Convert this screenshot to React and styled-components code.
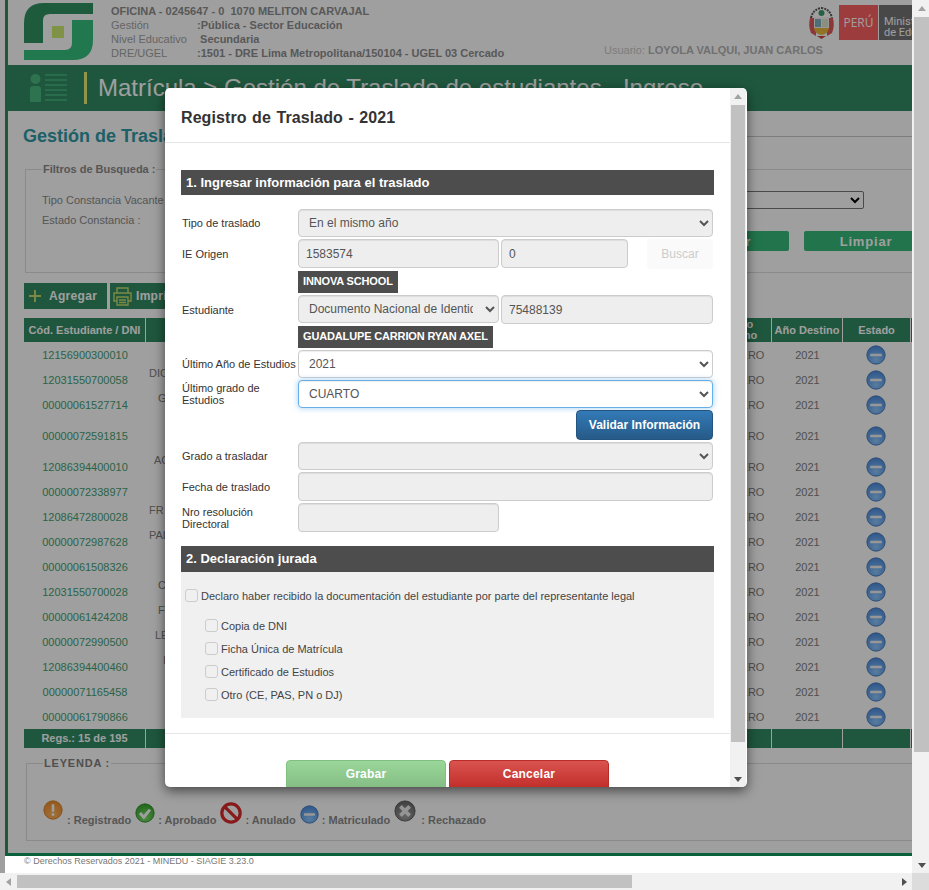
import React from 'react'
import styled, { createGlobalStyle } from 'styled-components'

const rows = [
    { cod: '12156900300010', name: '', indent: 0, height: 25 },
    { cod: '12031550700058', name: 'DIC', indent: 3, height: 25 },
    { cod: '00000061527714', name: 'G', indent: 12, height: 25 },
    { cod: '00000072591815', name: '', indent: 0, height: 37 },
    { cod: '12086394400010', name: 'AC', indent: 8, height: 25 },
    { cod: '00000072338977', name: '', indent: 0, height: 25 },
    { cod: '12086472800028', name: 'FR', indent: 3, height: 25 },
    { cod: '00000072987628', name: 'PAL', indent: 3, height: 25 },
    { cod: '00000061508326', name: '', indent: 0, height: 25 },
    { cod: '12031550700028', name: 'C', indent: 12, height: 25 },
    { cod: '00000061424208', name: 'F', indent: 12, height: 25 },
    { cod: '00000072990500', name: 'LE', indent: 9, height: 25 },
    { cod: '12086394400460', name: 'I', indent: 17, height: 25 },
    { cod: '00000071165458', name: '', indent: 0, height: 25 },
    { cod: '00000061790866', name: '', indent: 0, height: 25 },
]

const documents = ['Copia de DNI', 'Ficha Única de Matrícula', 'Certificado de Estudios', 'Otro (CE, PAS, PN o DJ)']

const Logo = () => (
    <svg width="69" height="57" viewBox="0 0 69 57">
        <path d="M69 0H20Q0 0 0 20V40H19V17Q19 11 26 11H69Z" fill="#309362" />
        <path d="M69 17H48V40Q48 47 41 47H0V57H49Q69 57 69 37Z" fill="#37c07d" />
        <rect x="28" y="23" width="12" height="12" fill="#cdeb71" />
    </svg>
)

const Escudo = () => (
    <svg width="27" height="33" viewBox="0 0 27 33">
        <path d="M3 12Q5 3 13.500 2Q22 3 24 12" fill="none" stroke="#555" strokeWidth="2" strokeDasharray="2 1" />
        <path d="M2 12Q0 20 3 27L8 30V12Z" fill="#e05a5a" />
        <path d="M25 12Q27 20 24 27L19 30V12Z" fill="#e05a5a" />
        <circle cx="13.500" cy="7" r="3" fill="#3f9a6d" />
        <rect x="6" y="11" width="15" height="11" fill="#f4f4f4" />
        <rect x="7" y="13" width="6" height="8" fill="#7fb0c0" />
        <rect x="14" y="13" width="6" height="8" fill="#dfe6c8" />
        <path d="M6 22H21Q20 28 13.500 29Q7 28 6 22Z" fill="#e8b93f" />
        <path d="M9 30L13.500 33L18 30Z" fill="#c8453f" />
    </svg>
)

const ListIcon = () => (
    <svg width="37" height="32" viewBox="0 0 37 32">
        <circle cx="5.500" cy="7" r="5" fill="#49b981" />
        <path d="M0 17Q0 14 3 14H8Q11 14 11 17V30H0Z" fill="#49b981" />
        <path d="M15 3H37M15 8H37M15 13H37M15 18H37M15 23H37M15 28H37" stroke="#49b981" strokeWidth="1.500" />
    </svg>
)

const PlusIcon = () => (
    <svg width="12" height="12" viewBox="0 0 12 12">
        <path d="M6 0V12M0 6H12" stroke="#c6dc6e" strokeWidth="2" />
    </svg>
)

const PrinterIcon = () => (
    <svg width="19" height="19" viewBox="0 0 19 19" fill="none" stroke="#c6dc6e" strokeWidth="1.400">
        <path d="M4 6V1H15V6" />
        <path d="M4 14H1V6H18V14H15" />
        <path d="M4 10H15V18H4ZM6 13H13M6 15.500H13" />
    </svg>
)

const statusColors = {
    registrado: ['#ffb45e', '#ee8f2e', '#d67b22'],
    aprobado: ['#7fe06a', '#35a82f', '#2a8a28'],
    matriculado: ['#8fc8ff', '#4f8fe0', '#3f70ad'],
    rechazado: ['#a0a0a0', '#6c6c6c', '#565656'],
    anulado: ['#d82a2a', '#d82a2a', '#d82a2a'],
}

const StatusIcon = ({ kind, size = 20 }) => (
    <svg width={size} height={size} viewBox="0 0 24 24">
        <defs>
            <radialGradient id={`glow-${kind}-${size}`} cx="50%" cy="75%" r="70%">
                <stop offset="0%" stopColor={statusColors[kind][0]} />
                <stop offset="100%" stopColor={statusColors[kind][1]} />
            </radialGradient>
        </defs>
        {kind === 'anulado' ? (
            <g fill="none" stroke="#d82a2a" strokeWidth="3.500">
                <circle cx="12" cy="12" r="10" />
                <path d="M5 5L19 19" />
            </g>
        ) : (
            <circle cx="12" cy="12" r="11" fill={`url(#glow-${kind}-${size})`} stroke={statusColors[kind][2]} strokeWidth="1" />
        )}
        {kind === 'matriculado' && <rect x="5" y="10.500" width="14" height="3" rx="1" fill="#f2f2f2" />}
        {kind === 'registrado' && <path d="M12 5V14M12 16V19" stroke="#fff" strokeWidth="3" />}
        {kind === 'aprobado' && <path d="M6 12L10.500 17L18 8" fill="none" stroke="#fff" strokeWidth="3.500" />}
        {kind === 'rechazado' && <path d="M7 7L17 17M17 7L7 17" stroke="#eee" strokeWidth="4" />}
    </svg>
)

const legend = [
    { kind: 'registrado', label: 'Registrado', size: 20, lift: 7, gap: 4 },
    { kind: 'aprobado', label: 'Aprobado', size: 20, lift: 4, gap: 3 },
    { kind: 'anulado', label: 'Anulado', size: 22, lift: 3, gap: 3 },
    { kind: 'matriculado', label: 'Matriculado', size: 19, lift: 3, gap: 3 },
    { kind: 'rechazado', label: 'Rechazado', size: 22, lift: 5, gap: 5 },
]

const App = () => {
    return (
        <Shell>
            <GlobalStyle />
            <Viewport>
                <Frame>
                    <Header>
                        <Logo />
                        <Info>
                            <strong>OFICINA - 0245647 - 0 &nbsp;1070 MELITON CARVAJAL</strong>
                            <InfoRow>Gestión<b>:Pública - Sector Educación</b></InfoRow>
                            <InfoRow>Nivel Educativo<b>&nbsp;Secundaria</b></InfoRow>
                            <InfoRow>DRE/UGEL<b>:1501 - DRE Lima Metropolitana/150104 - UGEL 03 Cercado</b></InfoRow>
                        </Info>
                        <UserSide>
                            <Brand>
                                <Escudo />
                                <PeruTag>PERÚ</PeruTag>
                                <MinTag>Ministerio<br />de Educación</MinTag>
                            </Brand>
                            <User>Usuario: <b>LOYOLA VALQUI, JUAN CARLOS</b></User>
                        </UserSide>
                    </Header>
                    <TitleBar>
                        <ListIcon />
                        <TitleMark />
                        <TitleText>Matrícula &gt; Gestión de Traslado de estudiantes - Ingreso</TitleText>
                    </TitleBar>
                    <Content>
                        <PageTitle><h1>Gestión de Traslado de estudiantes</h1></PageTitle>
                        <Filters>
                            <legend>Filtros de Busqueda :</legend>
                            <FilterRow>
                                <span>Tipo Constancia Vacante :</span>
                                <FilterSelect><option></option></FilterSelect>
                            </FilterRow>
                            <FilterLabel>Estado Constancia :</FilterLabel>
                            <FilterButtons>
                                <FilterButton>Buscar</FilterButton>
                                <FilterButton>Limpiar</FilterButton>
                            </FilterButtons>
                        </Filters>
                        <Actions>
                            <ActionButton><PlusIcon />Agregar</ActionButton>
                            <ActionButton $wide><PrinterIcon />Imprimir</ActionButton>
                        </Actions>
                        <Table>
                            <HeadRow>
                                <span>Cód. Estudiante / DNI</span>
                                <span>Apellidos y Nombres</span>
                                <span>Grado<br />Destino</span>
                                <span>Año Destino</span>
                                <span>Estado</span>
                                <span></span>
                            </HeadRow>
                            {rows.map(row =>
                                <Row key={row.cod} $height={row.height}>
                                    <Code>{row.cod}</Code>
                                    <Name $indent={row.indent}>{row.name}</Name>
                                    <span>TERCERO</span>
                                    <span>2021</span>
                                    <StateCell><StatusIcon kind="matriculado" /></StateCell>
                                </Row>
                            )}
                            <FootRow>
                                <span>Regs.: 15 de 195</span>
                                <span></span>
                                <span></span>
                                <span></span>
                                <span></span>
                                <span></span>
                            </FootRow>
                        </Table>
                        <Legend>
                            <legend>LEYENDA :</legend>
                            <LegendItems>
                                {legend.map(item =>
                                    <LegendItem key={item.kind} $gap={item.gap}>
                                        <LegendIcon $lift={item.lift}><StatusIcon kind={item.kind} size={item.size} /></LegendIcon>
                                        <span>: {item.label}</span>
                                    </LegendItem>
                                )}
                            </LegendItems>
                        </Legend>
                    </Content>
                </Frame>
                <Copyright>© Derechos Reservados 2021 - MINEDU - SIAGIE 3.23.0</Copyright>
                <Backdrop>
                    <Modal>
                        <ModalMain>
                            <ModalHeader>Registro de Traslado - 2021</ModalHeader>
                            <ModalBody>
                                <SectionBar>1. Ingresar información para el traslado</SectionBar>
                                <FormRow>
                                    <FieldLabel>Tipo de traslado</FieldLabel>
                                    <Select disabled><option>En el mismo año</option></Select>
                                </FormRow>
                                <FormRow>
                                    <FieldLabel>IE Origen</FieldLabel>
                                    <Fields>
                                        <Input $width={201} disabled value="1583574" readOnly />
                                        <Input $width={127} disabled value="0" readOnly />
                                        <SearchButton disabled>Buscar</SearchButton>
                                    </Fields>
                                </FormRow>
                                <FormRow>
                                    <span></span>
                                    <Fields><DarkTag>INNOVA SCHOOL</DarkTag></Fields>
                                </FormRow>
                                <FormRow>
                                    <FieldLabel>Estudiante</FieldLabel>
                                    <Fields>
                                        <Select $width={201} disabled><option>Documento Nacional de Identidad</option></Select>
                                        <Input disabled value="75488139" readOnly />
                                    </Fields>
                                </FormRow>
                                <FormRow>
                                    <span></span>
                                    <Fields><DarkTag>GUADALUPE CARRION RYAN AXEL</DarkTag></Fields>
                                </FormRow>
                                <FormRow>
                                    <FieldLabel>Último Año de Estudios</FieldLabel>
                                    <Select><option>2021</option></Select>
                                </FormRow>
                                <FormRow>
                                    <FieldLabel>Último grado de Estudios</FieldLabel>
                                    <Select $focus><option>CUARTO</option></Select>
                                </FormRow>
                                <ValidateRow>
                                    <ValidateButton>Validar Información</ValidateButton>
                                </ValidateRow>
                                <FormRow>
                                    <FieldLabel>Grado a trasladar</FieldLabel>
                                    <Select disabled><option></option></Select>
                                </FormRow>
                                <FormRow>
                                    <FieldLabel>Fecha de traslado</FieldLabel>
                                    <Input disabled />
                                </FormRow>
                                <FormRow>
                                    <FieldLabel>Nro resolución Directoral</FieldLabel>
                                    <Input $width={201} disabled />
                                </FormRow>
                                <SectionBar $second>2. Declaración jurada</SectionBar>
                                <Declaration>
                                    <CheckLine>
                                        <Box />
                                        <span>Declaro haber recibido la documentación del estudiante por parte del representante legal</span>
                                    </CheckLine>
                                    <DocumentList>
                                        {documents.map(doc =>
                                            <CheckLine key={doc}>
                                                <Box />
                                                <span>{doc}</span>
                                            </CheckLine>
                                        )}
                                    </DocumentList>
                                </Declaration>
                            </ModalBody>
                            <ModalFooter>
                                <SaveButton>Grabar</SaveButton>
                                <CancelButton>Cancelar</CancelButton>
                            </ModalFooter>
                        </ModalMain>
                        <ModalBar>
                            <Arrow $dir="up" $color="#a3a3a3" />
                            <ModalThumb />
                            <Arrow $dir="down" $color="#505050" />
                        </ModalBar>
                    </Modal>
                </Backdrop>
            </Viewport>
            <VerticalBar>
                <Arrow $dir="up" $color="#a3a3a3" />
                <PageThumb />
                <Arrow $dir="down" $color="#505050" />
            </VerticalBar>
            <HorizontalBar>
                <Arrow $dir="left" $color="#a3a3a3" />
                <HorizontalTrack><HorizontalThumb /></HorizontalTrack>
                <Arrow $dir="right" $color="#505050" />
            </HorizontalBar>
            <Corner />
        </Shell>
    );
};

const GlobalStyle = createGlobalStyle`
    html, body {
        margin: 0;
        padding: 0;
        overflow: hidden;
        background: #fff;
    }
    * {
        box-sizing: border-box;
    }
    body, input, select, button {
        font-family: "Liberation Sans", Arial, sans-serif;
    }
`

const Shell = styled.div`
    display: grid;
    grid-template-columns: 912px 17px;
    grid-template-rows: 873px 17px;
    width: 929px;
    height: 890px;
    overflow: hidden;
`

const Viewport = styled.div`
    position: relative;
    overflow: hidden;
    border-left: 5px solid #9f9f9f;
    background: #fff;
`

const Frame = styled.div`
    width: 1100px;
    height: 856px;
    border-left: 3px solid #338c64;
    border-bottom: 3px solid #0d9c5e;
    overflow: hidden;
`

const Header = styled.div`
    display: flex;
    height: 65px;
    padding: 3px 0 0 16px;
`

const Info = styled.div`
    display: flex;
    flex-direction: column;
    width: 493px;
    margin-left: 18px;
    padding-top: 1px;
    font-size: 11px;
    line-height: 14px;
    color: #a2a2a2;
    strong {
        color: #8e8e8e;
    }
`

const InfoRow = styled.div`
    display: grid;
    grid-template-columns: 86px 1fr;
    b {
        color: #8e8e8e;
    }
`

const UserSide = styled.div`
    display: flex;
    flex-direction: column;
    width: 400px;
`

const Brand = styled.div`
    display: flex;
    align-items: flex-start;
    height: 41px;
    padding: 2px 0 0 204px;
    svg {
        margin-top: 1px;
        margin-right: 4px;
    }
`

const PeruTag = styled.div`
    width: 39px;
    height: 35px;
    margin-right: 1px;
    background: #fb6060;
    color: #fff;
    font: 12px/35px "Open Sans", sans-serif;
    text-align: center;
`

const MinTag = styled.div`
    width: 90px;
    height: 35px;
    padding: 11px 0 0 5px;
    background: #747474;
    color: #fff;
    font: 11px/11px Roboto, sans-serif;
`

const User = styled.div`
    font-size: 11px;
    line-height: 14px;
    color: #c8c8c8;
    margin-top: -1px;
    b {
        color: #b4b4b4;
    }
`

const TitleBar = styled.div`
    display: flex;
    align-items: center;
    height: 46px;
    padding-left: 22px;
    background: #338c64;
`

const TitleMark = styled.div`
    width: 3px;
    height: 32px;
    margin: 0 11px 0 17px;
    background: #e6f07a;
`

const TitleText = styled.div`
    font-size: 24px;
    color: #fff;
    white-space: nowrap;
`

const Content = styled.div`
    padding-left: 16px;
`

const PageTitle = styled.div`
    display: flex;
    align-items: center;
    height: 51px;
    gap: 10px;
    h1 {
        margin: 0 0 0 -1px;
        font-size: 18px;
        color: #2f9aa6;
        white-space: nowrap;
    }
    &::after {
        content: '';
        flex: 1;
        height: 1px;
        background: #c8c8c8;
    }
`

const Filters = styled.fieldset`
    margin: 0 0 0 1px;
    padding: 15px 0 21px 16px;
    min-width: 0;
    border: 1px solid #ddd;
    font-size: 11px;
    color: #8a8a8a;
    legend {
        height: 14px;
        padding: 0 1px;
        font-weight: bold;
        font-size: 11px;
        line-height: 14px;
        color: #8a8a8a;
    }
`

const FilterRow = styled.div`
    display: grid;
    grid-template-columns: 358px 464px;
    align-items: center;
    height: 18px;
`

const FilterSelect = styled.select`
    height: 18px;
    border: 1px solid #777;
    border-radius: 2px;
    background: #fff;
`

const FilterLabel = styled.div`
    height: 14px;
    margin: 4px 0 4px;
    line-height: 14px;
`

const FilterButtons = styled.div`
    display: flex;
    gap: 15px;
    height: 20px;
    padding-left: 623px;
`

const FilterButton = styled.button`
    width: 124px;
    height: 20px;
    padding: 0;
    border: 0;
    border-radius: 2px;
    background: #37bb7a;
    color: #fff;
    font-weight: bold;
    font-size: 13px;
    letter-spacing: .8px;
`

const Actions = styled.div`
    display: flex;
    gap: 3px;
    margin-top: 10px;
`

const ActionButton = styled.div`
    display: flex;
    align-items: center;
    gap: ${props => props.$wide ? '4px' : '8px'};
    width: ${props => props.$wide ? '120px' : '83px'};
    height: 26px;
    padding-left: ${props => props.$wide ? '3px' : '5px'};
    background: #338c64;
    color: #fff;
    font-weight: bold;
    font-size: 12px;
    letter-spacing: .3px;
`

const Table = styled.div`
    width: 1000px;
    margin-top: 9px;
    font-size: 11px;
`

const gridColumns = '122px 557px 69px 71px 68px 113px'

const HeadRow = styled.div`
    display: grid;
    grid-template-columns: ${gridColumns};
    height: 24px;
    background: #338c64;
    color: #fff;
    font-weight: bold;
    text-align: center;
    span {
        display: flex;
        align-items: center;
        justify-content: center;
        border-right: 1px solid #fff;
        line-height: 11px;
    }
`

const Row = styled.div`
    display: grid;
    grid-template-columns: ${gridColumns};
    align-items: center;
    justify-items: center;
    height: ${props => props.$height}px;
    color: #808080;
`

const Code = styled.span`
    color: #469f73;
`

const Name = styled.span`
    justify-self: start;
    align-self: start;
    height: 12px;
    padding-left: ${props => props.$indent}px;
    line-height: 12px;
`

const StateCell = styled.div`
    display: flex;
    margin-right: 2px;
`

const FootRow = styled(HeadRow)`
    height: 19px;
`

const Legend = styled.fieldset`
    height: 85px;
    margin: 8px 0 0 2px;
    padding: 0 0 0 16px;
    min-width: 0;
    border: 1px solid #ddd;
    legend {
        height: 14px;
        padding: 0 1px;
        font-weight: bold;
        font-size: 11px;
        line-height: 14px;
        letter-spacing: .8px;
        color: #808080;
    }
`

const LegendItems = styled.div`
    display: flex;
    gap: 4px;
    align-items: flex-end;
    margin-top: 30px;
`

const LegendItem = styled.div`
    display: flex;
    align-items: flex-end;
    gap: ${props => props.$gap}px;
    font-size: 11px;
    font-weight: bold;
    color: #8a8a8a;
    line-height: 14px;
`

const LegendIcon = styled.div`
    display: flex;
    margin-bottom: ${props => props.$lift}px;
`

const Copyright = styled.div`
    height: 17px;
    padding-left: 19px;
    font-size: 9px;
    line-height: 11px;
    color: #777;
`

const Backdrop = styled.div`
    position: absolute;
    top: 0;
    left: -5px;
    width: 912px;
    height: 856px;
    padding: 88px 0 0 165px;
    background: rgba(0, 0, 0, .375);
`

const Modal = styled.div`
    display: flex;
    width: 582px;
    height: 699px;
    border-radius: 5px;
    background: #fff;
    box-shadow: 0 4px 12px rgba(0, 0, 0, .55);
    overflow: hidden;
`

const ModalMain = styled.div`
    width: 565px;
    height: 699px;
    overflow: hidden;
`

const ModalHeader = styled.div`
    height: 55px;
    padding-left: 16px;
    border-bottom: 1px solid #e5e5e5;
    font-weight: bold;
    font-size: 16px;
    word-spacing: 1px;
    letter-spacing: .08px;
    line-height: 59px;
    color: #333;
`

const ModalBody = styled.div`
    display: flex;
    flex-direction: column;
    gap: 2px;
    padding: 27px 16px 15px;
    border-bottom: 1px solid #e5e5e5;
`

const SectionBar = styled.div`
    width: 533px;
    height: ${props => props.$second ? '26px' : '25px'};
    margin-top: ${props => props.$second ? '12px' : '0'};
    margin-bottom: ${props => props.$second ? '-2px' : '12px'};
    padding-left: 5px;
    background: #4d4d4d;
    color: #fff;
    font-weight: bold;
    font-size: 13px;
    line-height: 25px;
`

const FormRow = styled.div`
    display: grid;
    grid-template-columns: 117px 415px;
    align-items: center;
`

const FieldLabel = styled.label`
    padding-left: 1px;
    font-size: 11px;
    line-height: 12px;
    color: #333;
`

const Fields = styled.div`
    display: flex;
    gap: 2px;
`

const Select = styled.select`
    width: ${props => props.$width ? `${props.$width}px` : '100%'};
    flex-shrink: 0;
    height: 28px;
    padding: 0 ${props => props.$width ? '9px' : '6px'} 0 6px;
    border: 1px solid ${props => props.$focus ? '#66afe9' : '#ccc'};
    border-radius: 4px;
    background: ${props => props.disabled ? '#eee' : '#fff'};
    box-shadow: ${props => props.$focus ? 'inset 0 1px 1px rgba(0,0,0,.075), 0 0 6px rgba(102,175,233,.6)' : 'inset 0 1px 1px rgba(0,0,0,.075)'};
    color: #555;
    font-size: 12px;
    opacity: 1;
    outline: none;
    &:disabled {
        opacity: 1;
        color: #555;
    }
`

const Input = styled.input`
    width: ${props => props.$width ? `${props.$width}px` : '100%'};
    flex-shrink: ${props => props.$width ? 0 : 1};
    height: 29px;
    padding: 0 7px;
    border: 1px solid #ccc;
    border-radius: 4px;
    background: #eee;
    box-shadow: inset 0 1px 1px rgba(0,0,0,.075);
    color: #555;
    font-size: 12px;
    opacity: 1;
    &:disabled {
        color: #555;
        -webkit-text-fill-color: #555;
    }
`

const SearchButton = styled.button`
    width: 66px;
    height: 30px;
    margin-left: 17px;
    padding: 0;
    border: 0;
    border-radius: 4px;
    background: #fafafa;
    color: #ccc;
    font-size: 12px;
`

const DarkTag = styled.span`
    height: 22px;
    padding: 0 5px;
    background: #4d4d4d;
    color: #fff;
    font-weight: bold;
    font-size: 11px;
    letter-spacing: -.15px;
    line-height: 21px;
`

const ValidateRow = styled.div`
    display: flex;
    justify-content: flex-end;
    width: 532px;
`

const ValidateButton = styled.button`
    width: 137px;
    height: 30px;
    padding: 0;
    border: 1px solid #245580;
    border-radius: 4px;
    background: linear-gradient(#337ab7, #265a88);
    color: #fff;
    font-weight: bold;
    font-size: 12px;
`

const Declaration = styled.div`
    width: 533px;
    height: 146px;
    padding: 15px 0 0 4px;
    background: #f0f0f0;
`

const CheckLine = styled.div`
    display: flex;
    align-items: flex-start;
    gap: 3px;
    height: 23px;
    color: #444;
    font-size: 11px;
    span {
        margin-top: 2px;
        line-height: 14px;
    }
`

const Box = styled.span`
    width: 13px;
    height: 13px;
    border: 1px solid #ccc;
    border-radius: 3px;
    background: #f0f0f0;
`

const DocumentList = styled.div`
    margin-top: 7px;
    padding-left: 20px;
`

const ModalFooter = styled.div`
    display: flex;
    gap: 3px;
    padding: 26px 0 0 121px;
`

const SaveButton = styled.button`
    flex-shrink: 0;
    width: 160px;
    height: 40px;
    padding: 0 0 13px;
    border: 1px solid #7fbf7f;
    border-radius: 4px;
    background: linear-gradient(#9ad69a 0, #84bd84 27px);
    color: #fff;
    font-weight: bold;
    font-size: 12px;
    letter-spacing: .2px;
`

const CancelButton = styled(SaveButton)`
    border-color: #b92c28;
    background: linear-gradient(#d9534f 0, #c12e2a 27px);
`

const ModalBar = styled.div`
    display: flex;
    flex-direction: column;
    align-items: center;
    width: 16px;
    margin-right: 1px;
    background: #f1f1f1;
`

const Arrow = styled.div`
    flex-shrink: 0;
    width: ${props => props.$dir === 'left' || props.$dir === 'right' ? '17px' : '100%'};
    height: ${props => props.$dir === 'left' || props.$dir === 'right' ? '100%' : '17px'};
    position: relative;
    &::after {
        content: '';
        position: absolute;
        top: 50%;
        left: 50%;
        transform: translate(-50%, -50%);
        border: 4px solid transparent;
        border-width: ${props => props.$dir === 'left' || props.$dir === 'right' ? '4px 5px' : '5px 4px'};
        ${props => ({ up: 'border-bottom-color', down: 'border-top-color', left: 'border-right-color', right: 'border-left-color' })[props.$dir]}: ${props => props.$color};
        margin-top: ${props => props.$dir === 'up' ? '-3px' : props.$dir === 'down' ? '3px' : '0'};
        margin-left: ${props => props.$dir === 'left' ? '-3px' : props.$dir === 'right' ? '3px' : '0'};
    }
`

const ModalThumb = styled.div`
    width: 14px;
    height: 637px;
    margin-bottom: auto;
    background: #c1c1c1;
`

const VerticalBar = styled.div`
    display: flex;
    flex-direction: column;
    padding-left: 2px;
    background: #f1f1f1;
`

const PageThumb = styled.div`
    width: 15px;
    height: 735px;
    margin-bottom: auto;
    background: #c1c1c1;
`

const HorizontalBar = styled.div`
    display: flex;
    background: #f1f1f1;
`

const HorizontalTrack = styled.div`
    flex: 1;
    padding: 2px 0;
`

const HorizontalThumb = styled.div`
    width: 615px;
    height: 13px;
    background: #c1c1c1;
`

const Corner = styled.div`
    background: #dcdcdc;
`

export default App;
